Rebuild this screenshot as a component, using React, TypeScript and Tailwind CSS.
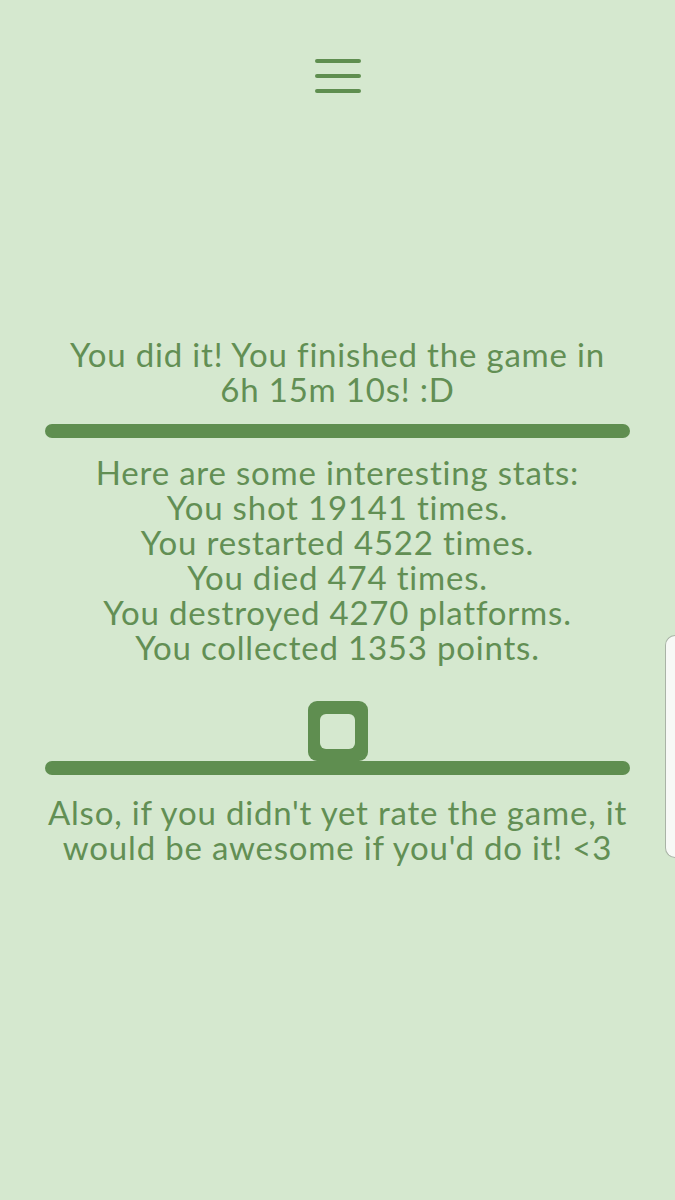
import React from 'react';

const stats = [
  'You shot 19141 times.',
  'You restarted 4522 times.',
  'You died 474 times.',
  'You destroyed 4270 platforms.',
  'You collected 1353 points.',
];

export default function App() {
  return (
    <div className="relative min-h-[1200px] w-full bg-[#d5e8cf] text-[#628f54] font-['Lato',sans-serif] [font-variant-ligatures:none]">
      {/* menu */}
      <div className="flex justify-center pt-[59px]">
        <div className="flex w-[46px] flex-col gap-[11px]">
          <div className="h-[4px] rounded-full bg-[#5f8e50]" />
          <div className="h-[4px] rounded-full bg-[#5f8e50]" />
          <div className="h-[4px] rounded-full bg-[#5f8e50]" />
        </div>
      </div>

      <div className="flex flex-col px-[45px] pt-[244px] text-center text-[33px] leading-[35px] tracking-[0.8px]">
        <p>
          You did it! You finished the game in
          <br />
          6h 15m 10s! :D
        </p>
        <div className="mt-[17px] h-[14px] rounded-full bg-[#5f8e50]" />

        <div className="mt-[17px]">
          <p>Here are some interesting stats:</p>
          {stats.map((s) => (
            <p key={s}>{s}</p>
          ))}
        </div>

        <div className="mt-[36px] flex justify-center">
          <div className="flex h-[60px] w-[60px] items-center justify-center rounded-[9px] bg-[#5f8e50]">
            <div className="h-[35px] w-[35px] rounded-[6px] bg-[#d5e8cf]" />
          </div>
        </div>
        <div className="h-[14px] rounded-full bg-[#5f8e50]" />

        <p className="mt-[20px]">
          Also, if you didn't yet rate the game, it
          <br />
          would be awesome if you'd do it! &lt;3
        </p>
      </div>

      {/* edge handle */}
      <div className="absolute right-0 top-[635px] h-[223px] w-[10px] rounded-l-[10px] border border-r-0 border-[#a9b3a6] bg-[#f7f9f6]" />
    </div>
  );
}
